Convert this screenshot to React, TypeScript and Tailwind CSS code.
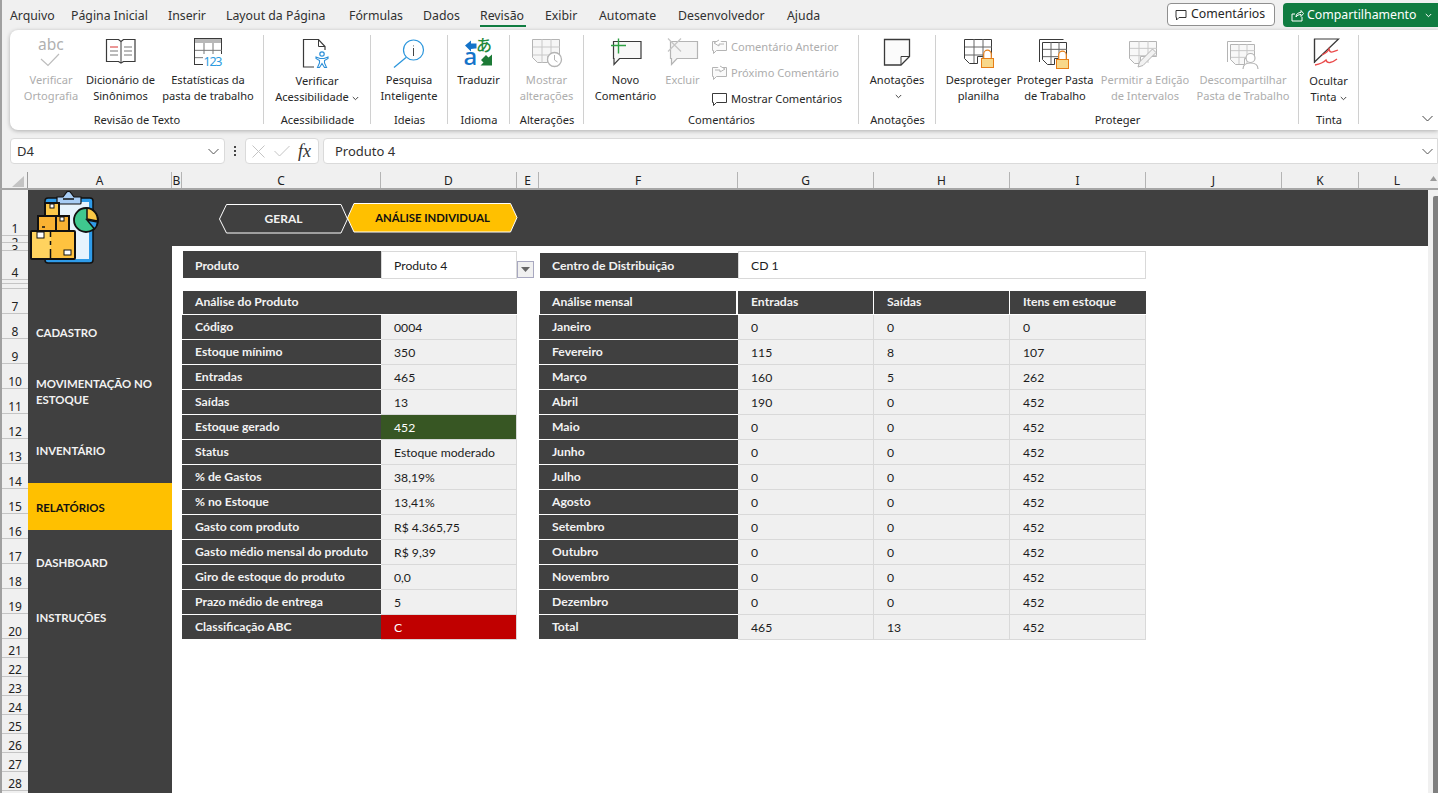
import React from "react";

const ui = { fontFamily: '"Noto Sans", "Open Sans", sans-serif' };
const cell = { fontFamily: 'Lato, "Noto Sans", sans-serif' };

function Ico({ x, y, w, h, children }: { x: number; y: number; w: number; h: number; children: React.ReactNode }) {
  return (
    <svg width={w} height={h} viewBox={`${x} ${y} ${w} ${h}`} fill="none" className="block shrink-0 overflow-visible">
      {children}
    </svg>
  );
}

const D = "#3a3a3a";
const G = "#b4b4b4";

function GridLines({ x, y, w, h, c, cols = 3, rows = 3 }: { x: number; y: number; w: number; h: number; c: string; cols?: number; rows?: number }) {
  const l: React.ReactNode[] = [];
  for (let i = 1; i < cols; i++) l.push(<path key={"c" + i} d={`M${x + (w * i) / cols} ${y}V${y + h}`} stroke={c} />);
  for (let i = 1; i < rows; i++) l.push(<path key={"r" + i} d={`M${x} ${y + (h * i) / rows}H${x + w}`} stroke={c} />);
  return <>{l}</>;
}

const icons: Record<string, React.ReactNode> = {
  abc: (
    <Ico x={34} y={38} w={34} h={32}>
      <text x={38} y={51} fontSize={15.5} fill="#b0b0b0" fontFamily="Noto Sans">abc</text>
      <path d="M41 60l7 6.5L59 55" stroke="#bdbdbd" strokeWidth={1.2} />
    </Ico>
  ),
  book: (
    <Ico x={102} y={38} w={36} h={28}>
      <path d="M105.5 40.5h12l2.5 2 2.5-2h11.5v22h-11.5l-2.5 1.5-2.5-1.5h-12z" stroke={D} strokeWidth={1.2} fill="#fff" />
      <path d="M120 42.5v21" stroke={D} />
      <path d="M109 48h8" stroke="#d8312e" />
      <path d="M109 52h8M109 56h8M123 48h8M123 52h8M123 56h8" stroke="#777" />
    </Ico>
  ),
  stats: (
    <Ico x={192} y={38} w={32} h={30}>
      <rect x={194.5} y={39.5} width={27} height={26} stroke={D} fill="#fff" />
      <rect x={195} y={40} width={26} height={4} fill="#b7b7b7" />
      <GridLines x={195} y={44} w={27} h={22} c="#777" />
      <rect x={203} y={55} width={20} height={12} fill="#fff" />
      <text x={203.5} y={66.5} fontSize={12.5} fill="#2d9be0" fontFamily="Noto Sans" textLength={19}>123</text>
    </Ico>
  ),
  access: (
    <Ico x={304} y={37} w={32} h={33}>
      <path d="M306.5 39.5h15l6.5 7v20.5h-21.5z" stroke={D} strokeWidth={1.2} fill="#fff" />
      <path d="M321.5 39.5v7h6.5" stroke={D} />
      <rect x={317} y={50} width={17} height={19} fill="#fff" />
      <circle cx={325} cy={54} r={2.2} stroke="#2c8fd8" strokeWidth={1.2} />
      <path d="M319 57l4 1.5h4l4-1.5v1.5l-3.5 2v2.5l2 4.5h-2l-2.5-4-2.5 4h-2l2-4.500v-2.500l-3.500-2z" stroke="#2c8fd8" strokeWidth={1.1} fill="#fff" />
    </Ico>
  ),
  search: (
    <Ico x={392} y={37} w={34} h={33}>
      <circle cx={413.5} cy={50} r={10} stroke="#2c96dc" strokeWidth={1.2} fill="#fff" />
      <path d="M406 57.500l-12 10" stroke="#2c96dc" strokeWidth={1.3} />
      <path d="M413.500 45.500v.8M413.500 48v8" stroke="#444" />
    </Ico>
  ),
  translate: (
    <Ico x={463} y={38} w={31} h={31}>
      <path d="M465 46.500l6-5v3h5.500v5h-1.500l-4 .5v2.500z" fill="#1473c9" />
      <text x={463.5} y={66} fontSize={24} fill="#1473c9" fontFamily="Noto Sans" fontWeight={500}>a</text>
      <text x={476} y={52} fontSize={16} fill="#1f8a3c" fontFamily="Noto Sans CJK JP" fontWeight={500}>あ</text>
      <path d="M492 66.500h-11.500l3-3-2.500-2.500 5-5 2.500 2.500 3.500-3z" fill="#1c7a36" />
    </Ico>
  ),
  changes: (
    <Ico x={531} y={38} w={34} h={32}>
      <path d="M533.500 40.500h27v17h-12v6h-10l-5-5z" stroke={G} fill="#f6f6f6" />
      <GridLines x={534} y={40} w={27} h={24} c="#c8c8c8" />
      <circle cx={555.5} cy={60.5} r={7} stroke={G} strokeWidth={1.3} fill="#fff" />
      <path d="M555.500 56v5l3 2" stroke={G} />
    </Ico>
  ),
  newc: (
    <Ico x={608} y={36} w={34} h={32}>
      <path d="M612.500 40.500h27.500v17h-21.500l-5.500 6v-6h-.5z" stroke={D} strokeWidth={1.2} fill="#f7f7f7" />
      <path d="M610 44.500h15M617.500 37.500v15" stroke="#2ea043" strokeWidth={1.4} />
    </Ico>
  ),
  delc: (
    <Ico x={665} y={36} w={34} h={32}>
      <path d="M669.500 40.500h27v17h-20.500l-5.500 6v-6h-1z" stroke={G} strokeWidth={1.2} fill="#f4f4f4" />
      <path d="M667 37.500l13 13M680 37.500l-13 13" stroke="#c6c6c6" strokeWidth={1.3} />
    </Ico>
  ),
  note: (
    <Ico x={882} y={38} w={30} h={30}>
      <path d="M884.500 40.500h25v17l-8.500 8.500h-16.500z" stroke={D} strokeWidth={1.3} fill="#fbfbfb" />
      <path d="M909.500 57.500h-8.500v8.500" stroke={D} />
    </Ico>
  ),
  unprot: (
    <Ico x={962} y={38} w={34} h={32}>
      <path d="M964.500 40.500h27v17h-14v7h-8l-5-5z" stroke={D} fill="#fff" />
      <GridLines x={965} y={40} w={27} h={24} c="#666" />
      <rect x={981.5} y={59.5} width={12} height={9} fill="#f8d88a" stroke="#e67e17" />
      <path d="M983.700 59v-4a3.800 3.800 0 0 1 7.600 0v4" stroke="#e67e17" strokeWidth={1.2} fill="#fff" />
    </Ico>
  ),
  prot: (
    <Ico x={1040} y={37} w={34} h={33}>
      <path d="M1041.500 62v-22.500h24" stroke={D} />
      <path d="M1044.500 42.500h24v16h-12v6h-7l-5-5z" stroke={D} fill="#fff" />
      <GridLines x={1045} y={42} w={24} h={22} c="#666" />
      <rect x={1058.5} y={59.5} width={12} height={9} fill="#f8d88a" stroke="#e67e17" />
      <path d="M1060.700 59v-4a3.800 3.800 0 0 1 7.600 0v4" stroke="#e67e17" strokeWidth={1.2} fill="#fff" />
    </Ico>
  ),
  permit: (
    <Ico x={1130} y={38} w={34} h={32}>
      <path d="M1131.500 42.500h27v15h-16v7h-6l-5-5z" stroke={G} fill="#f8f8f8" />
      <GridLines x={1132} y={42} w={27} h={22} c="#c8c8c8" />
      <path d="M1140 68l1.500-5 13-13 3.500 3.500-13 13z" stroke={G} fill="#f2f2f2" />
    </Ico>
  ),
  unshare: (
    <Ico x={1227} y={37} w={34} h={33}>
      <path d="M1228.500 62v-20.500h24" stroke={G} />
      <path d="M1231.500 44.500h24v14h-10v6h-9l-5-5z" stroke={G} fill="#f8f8f8" />
      <GridLines x={1232} y={44} w={24} h={20} c="#c8c8c8" />
      <circle cx={1251.5} cy={58} r={4.5} stroke={G} strokeWidth={1.2} fill="#fff" />
      <path d="M1244 69c0-4 3-6 7.500-6s7.500 2 7.500 6" stroke={G} strokeWidth={1.2} fill="#fff" />
    </Ico>
  ),
  ink: (
    <Ico x={1313} y={38} w={34} h={30}>
      <path d="M1315.500 40h24l-24 23z" stroke={D} strokeWidth={1.2} fill="#fff" />
      <path d="M1315.500 40v24" stroke={D} strokeWidth={1.2} />
      <path d="M1323 56c4-2 6-3 7-6 1 5 4 3 9 1M1316 66c5-1 8-2 11-5 1 4 6 3 11-1" stroke="#ea4b4b" strokeWidth={1.3} />
    </Ico>
  ),
};

const Bub = ({ gray, dir }: { gray?: boolean; dir?: "l" | "r" }) => {
  const c = gray ? G : D;
  return (
    <svg width="17" height="16" viewBox="0 0 17 16" fill="none" className="shrink-0">
      <path d="M1.500 2.500h14v9h-10l-3 3v-3h-1z" stroke={c} fill={gray ? "#fafafa" : "#fff"} />
      {dir === "l" && <path d="M8 1L3 4l5 3V5h5" stroke={c} fill="#fff" />}
      {dir === "r" && <path d="M9 1l5 3-5 3V5H4" stroke={c} fill="#fff" />}
    </svg>
  );
};

function Caret({ c = "#444" }: { c?: string }) {
  return (
    <svg width="7" height="5" viewBox="0 0 7 5" fill="none" className="inline-block ml-[3px] align-middle">
      <path d="M.800 1l2.700 2.700L6.200 1" stroke={c} strokeWidth="1" />
    </svg>
  );
}

function Btn({ w, ico, a, b, off, caret, low }: { w: number; ico: string; a: string; b?: string; off?: boolean; caret?: boolean; low?: boolean }) {
  return (
    <div style={{ width: w }} className="flex flex-col items-center shrink-0">
      <div className="h-[42px] flex items-start justify-center pt-[7px]">{icons[ico]}</div>
      <div className={`whitespace-nowrap text-center leading-[16px] ${low ? "mt-[1px]" : ""} ${off ? "text-[#adadad]" : "text-[#262626]"}`}>
        <div>{a}</div>
        {b && (
          <div>
            {b}
            {caret && <Caret />}
          </div>
        )}
      </div>
    </div>
  );
}

function Group({ w, label, children, last }: { w: number; label: string; children?: React.ReactNode; last?: boolean }) {
  return (
    <div style={{ width: w }} className="relative h-full flex flex-col shrink-0">
      <div className="flex-1 flex min-h-0">{children}</div>
      <div className="h-[20px] leading-[20px] text-center text-[#262626] whitespace-nowrap">{label}</div>
      {!last && <div className="absolute right-0 top-[5px] bottom-[6px] w-px bg-[#d0d0d0]" />}
    </div>
  );
}

const tabs: [string, number][] = [
  ["Arquivo", 61], ["Página Inicial", 97], ["Inserir", 58], ["Layout da Página", 123], ["Fórmulas", 74], ["Dados", 57],
  ["Revisão", 65], ["Exibir", 54], ["Automate", 79], ["Desenvolvedor", 109], ["Ajuda", 50],
];

function TopBar() {
  return (
    <div className="h-[30px] flex items-start pl-[10px] pr-0 relative">
      {tabs.map(([t, w]) => (
        <div key={t} style={{ width: w }} className="h-[27px] leading-[31px] text-[12.3px] text-[#303030] whitespace-nowrap relative shrink-0">
          {t}
          {t === "Revisão" && <div className="absolute left-0 top-[25px] h-[2px] w-[46px] bg-[#107c41]" />}
        </div>
      ))}
      <div className="ml-auto flex items-start pt-[3px]">
        <div className="w-[108px] h-[23px] rounded-[4px] border border-[#8f8f8f] bg-white flex items-center pl-[7px] gap-[4px] text-[12.3px] text-[#262626]">
          <svg width="12" height="12" viewBox="0 0 12 12" fill="none"><path d="M1 1.500h10v7H4l-2.500 2.500V8.500H1z" stroke="#333" /></svg>
          Comentários
        </div>
        <div className="w-[155px] h-[24px] ml-[8px] rounded-l-[4px] bg-[#107c41] flex items-center pl-[8px] text-[12.3px] text-white whitespace-nowrap">
          <svg width="13" height="13" viewBox="0 0 13 13" fill="none" className="mr-[3px]"><path d="M1 5v7h10V8M5 8c0-3 2-4.500 5-4.500V1.500l2.500 3-2.500 3V5.500C7.500 5.500 6 6.500 5 8zM1 5h3" stroke="#fff" /></svg>
          Compartilhamento
          <span className="ml-auto mr-[6px] flex"><Caret c="#fff" /></span>
        </div>
      </div>
    </div>
  );
}

function Small({ off, dir, t }: { off?: boolean; dir?: "l" | "r"; t: string }) {
  return (
    <div className={`h-[26px] shrink-0 flex items-center gap-[3px] whitespace-nowrap ${off ? "text-[#adadad]" : "text-[#262626]"}`}>
      <Bub gray={off} dir={dir} />
      {t}
    </div>
  );
}

function Ribbon() {
  return (
    <div className="mx-0 ml-[10px] h-[100px] bg-white rounded-l-[8px] shadow-[0_1px_4px_rgba(0,0,0,0.28)] flex text-[11.1px] relative">
      <Group w={254} label="Revisão de Texto">
        <div className="flex pl-[3px]">
          <Btn w={76} ico="abc" a="Verificar" b="Ortografia" off />
          <Btn w={63} ico="book" a="Dicionário de" b="Sinônimos" />
          <Btn w={112} ico="stats" a="Estatísticas da" b="pasta de trabalho" />
        </div>
      </Group>
      <Group w={107} label="Acessibilidade">
        <Btn w={106} ico="access" a="Verificar" b="Acessibilidade" caret low />
      </Group>
      <Group w={77} label="Ideias">
        <Btn w={76} ico="search" a="Pesquisa" b="Inteligente" />
      </Group>
      <Group w={62} label="Idioma">
        <Btn w={61} ico="translate" a="Traduzir" />
      </Group>
      <Group w={74} label="Alterações">
        <Btn w={73} ico="changes" a="Mostrar" b="alterações" off />
      </Group>
      <Group w={275} label="Comentários">
        <div className="flex pl-[2px]">
          <Btn w={79} ico="newc" a="Novo" b="Comentário" />
          <Btn w={35} ico="delc" a="Excluir" off />
          <div className="pl-[11px] pt-[4px] flex flex-col">
            <Small off dir="l" t="Comentário Anterior" />
            <Small off dir="r" t="Próximo Comentário" />
            <Small t="Mostrar Comentários" />
          </div>
        </div>
      </Group>
      <Group w={77} label="Anotações">
        <div className="w-[76px] flex flex-col items-center">
          <div className="h-[42px] pt-[7px]">{icons.note}</div>
          <div className="leading-[16px] text-[#262626]">Anotações</div>
          <div className="leading-[16px] -mt-[1px]"><Caret /></div>
        </div>
      </Group>
      <Group w={363} label="Proteger">
        <div className="flex pl-[7px]">
          <Btn w={71} ico="unprot" a="Desproteger" b="planilha" />
          <Btn w={82} ico="prot" a="Proteger Pasta" b="de Trabalho" />
          <Btn w={98} ico="permit" a="Permitir a Edição" b="de Intervalos" off />
          <Btn w={98} ico="unshare" a="Descompartilhar" b="Pasta de Trabalho" off />
        </div>
      </Group>
      <Group w={60} label="Tinta">
        <Btn w={59} ico="ink" a="Ocultar" b="Tinta" caret low />
      </Group>
      <svg width="11" height="7" viewBox="0 0 11 7" fill="none" className="absolute right-[5px] bottom-[8px]"><path d="M.500 1l5 5 5-5" stroke="#444" /></svg>
    </div>
  );
}

function FormulaBar() {
  return (
    <div className="mt-[8px] h-[26px] flex text-[13px] text-[#303030]">
      <div className="ml-[10px] w-[215px] bg-white border border-[#dadada] rounded-[4px] flex items-center pl-[6px] pt-px">
        D4
        <svg width="11" height="7" viewBox="0 0 11 7" fill="none" className="ml-auto mr-[5px]"><path d="M.500 1l5 5 5-5" stroke="#555" /></svg>
      </div>
      <div className="w-[20px] flex flex-col items-center justify-center gap-[2px]">
        <span className="w-[2px] h-[2px] bg-[#444]" /><span className="w-[2px] h-[2px] bg-[#444]" /><span className="w-[2px] h-[2px] bg-[#444]" />
      </div>
      <div className="w-[74px] bg-white border border-[#dadada] rounded-[4px] flex items-center pl-[6px] gap-[9px]">
        <svg width="13" height="13" viewBox="0 0 13 13" fill="none"><path d="M.500.500l12 12M12.500.500l-12 12" stroke="#c4c4c4" /></svg>
        <svg width="16" height="12" viewBox="0 0 16 12" fill="none"><path d="M.500 6l5 5 10-10" stroke="#c4c4c4" /></svg>
        <span className="italic text-[18px] leading-none text-[#333] -ml-[1px]" style={{ fontFamily: '"Liberation Serif", serif' }}>fx</span>
      </div>
      <div className="ml-[4px] flex-1 bg-white border border-[#dadada] rounded-l-[4px] flex items-center pl-[11px] pt-px">
        Produto 4
        <svg width="11" height="7" viewBox="0 0 11 7" fill="none" className="ml-auto mr-[4px]"><path d="M.500 1l5 5 5-5" stroke="#555" /></svg>
      </div>
    </div>
  );
}

const cols: [string, number][] = [
  ["A", 144], ["B", 10], ["C", 199], ["D", 136], ["E", 22], ["F", 199], ["G", 136], ["H", 136], ["I", 136], ["J", 136], ["K", 77],
];

function ColHeaders() {
  return (
    <div className="h-[16px] flex box-content border-b-2 border-[#a6a6a6]">
      <div className="w-[28px] shrink-0 relative border-r border-[#9a9a9a]">
        <svg width="12" height="11" viewBox="0 0 12 11" className="absolute left-[12px] top-[4px]"><path d="M12 0v11H0z" fill="#c3c3c3" /></svg>
      </div>
      {cols.map(([c, w]) => (
        <div key={c} style={{ width: w }} className="shrink-0 text-center text-[12px] leading-[18px] text-[#222] border-r border-[#b4b4b4]">{c}</div>
      ))}
      <div className="w-[69px] shrink-0 pl-[7px] text-center text-[12px] leading-[18px] text-[#222]">L</div>
      <div className="w-[10px] shrink-0 relative">
        <svg width="7" height="5" viewBox="0 0 7 5" className="absolute left-[2px] top-[4px]"><path d="M0 5l3.500-5L7 5z" fill="#9a9a9a" /></svg>
      </div>
    </div>
  );
}

const rows: [string, number][] = [
  ["1", 46], ["2", 7], ["3", 8], ["4", 29], ["", 4], ["", 5], ["7", 25], ["8", 25], ["9", 25], ["10", 25], ["11", 25], ["12", 25], ["13", 25],
  ["14", 25], ["15", 25], ["16", 25], ["17", 25], ["18", 25], ["19", 25], ["20", 25], ["21", 19], ["22", 19], ["23", 19], ["24", 19], ["25", 19], ["26", 19], ["27", 19], ["28", 19], ["", 19],
];

function RowHeaders() {
  return (
    <div className="w-[28px] shrink-0 flex flex-col pl-[2px]">
      {rows.map(([r, h], i) => (
        <div
          key={i}
          style={{ height: h }}
          className={`shrink-0 overflow-hidden flex justify-center text-[12px] leading-[13px] text-[#222] border-b border-[#c4c4c4] ${h < 10 ? "items-start" : "items-end"}`}
        >
          {r}
        </div>
      ))}
    </div>
  );
}

function Logo() {
  return (
    <svg width="70" height="74" viewBox="29 190 70 74" fill="none" className="block">
      <rect x="45" y="197" width="48" height="65" rx="3" fill="#2f9be8" stroke="#111" strokeWidth="1.500" />
      <rect x="48" y="201" width="41" height="57" fill="#e6f3fd" />
      <path d="M57 196h6l3-4c1-2 4-2 5 0l3 4h7v6a1 1 0 0 1-1 1H57z" fill="#a8cdf5" stroke="#111" strokeWidth="1.200" />
      <path d="M63 198h11" stroke="#111" strokeWidth="1.500" />
      <rect x="45" y="202" width="14" height="13" fill="#fdc94a" stroke="#111" strokeWidth="2" />
      <rect x="50" y="203" width="4" height="4" fill="#fff" stroke="#111" />
      <rect x="38" y="215" width="18" height="15" fill="#f9b233" stroke="#111" strokeWidth="2" />
      <path d="M42 226h3" stroke="#111" strokeWidth="1.500" />
      <rect x="56" y="215" width="13" height="15" fill="#f9b233" stroke="#111" strokeWidth="2" />
      <rect x="60" y="216" width="4" height="4" fill="#fff" stroke="#111" />
      <rect x="31" y="230" width="44" height="28" rx="1" fill="#ffc23f" />
      <rect x="31" y="230" width="20" height="28" fill="#ffd35f" />
      <rect x="31" y="230" width="44" height="28" rx="1" stroke="#111" strokeWidth="2" />
      <path d="M50.500 230v6M50.500 240v4M50.500 248v10" stroke="#111" strokeWidth="1.500" />
      <rect x="37" y="231" width="7" height="6" fill="#fff" stroke="#111" />
      <rect x="64" y="249" width="7" height="5" fill="#fff" stroke="#111" />
      <circle cx="86" cy="219" r="12" fill="#3fc88e" stroke="#111" strokeWidth="1.800" />
      <path d="M87 207a12 12 0 0 1 10.500 13L87 218z" fill="#fbc945" stroke="#111" strokeWidth="1.500" />
      <path d="M87 219l10.500 2a12 12 0 0 1-3 7z" fill="#2f9be8" stroke="#111" strokeWidth="1.500" />
    </svg>
  );
}

function Nav({ h, active, pb, pt, children }: { h: number; active?: boolean; pb?: number; pt?: number; children: React.ReactNode }) {
  return (
    <div
      style={{ height: h, paddingBottom: pb, paddingTop: pt }}
      className={`flex items-center pl-[8px] pr-[4px] text-[11.4px] font-bold leading-[16px] ${active ? "bg-[#ffc000] text-[#111]" : "text-[#f2f2f2]"}`}
    >
      <div>{children}</div>
    </div>
  );
}

function Sidebar() {
  return (
    <div className="w-[144px] shrink-0 bg-[#404040] flex flex-col" style={cell}>
      <div className="h-[116px] pt-[1px] pl-[1px]"><Logo /></div>
      <Nav h={54}>CADASTRO</Nav>
      <Nav h={65} pb={2}>MOVIMENTAÇÃO NO ESTOQUE</Nav>
      <Nav h={58} pb={6}>INVENTÁRIO</Nav>
      <Nav h={47} active pt={2}>RELATÓRIOS</Nav>
      <Nav h={66}>DASHBOARD</Nav>
      <Nav h={44}>INSTRUÇÕES</Nav>
    </div>
  );
}

function Banner() {
  return (
    <div className="h-[56px] bg-[#404040] flex items-start pl-[47px] pt-[13px]" style={cell}>
      <div className="relative w-[129px] h-[30px] mt-px flex items-center justify-center">
        <svg width="129" height="30" viewBox="0 0 129 30" className="absolute inset-0">
          <path d="M.500 15L7.500 .500H122L128.500 15 122 29H7.500z" fill="#404040" stroke="#fff" />
        </svg>
        <span className="relative text-[12px] font-bold text-[#f2f2f2]">GERAL</span>
      </div>
      <div className="relative w-[171px] h-[30px] -ml-[1px] flex items-center justify-center">
        <svg width="171" height="30" viewBox="0 0 171 30" className="absolute inset-0">
          <path d="M.500 15L7 .500H163.500L170 14.500 163.500 29H7z" fill="#ffc000" stroke="#fff" />
        </svg>
        <span className="relative text-[11.300px] font-bold text-[#111]">ANÁLISE INDIVIDUAL</span>
      </div>
    </div>
  );
}

const left: [string, string, string?][] = [
  ["Código", "0004"], ["Estoque mínimo", "350"], ["Entradas", "465"], ["Saídas", "13"], ["Estoque gerado", "452", "g"], ["Status", "Estoque moderado"],
  ["% de Gastos", "38,19%"], ["% no Estoque", "13,41%"], ["Gasto com produto", "R$ 4.365,75"], ["Gasto médio mensal do produto", "R$ 9,39"],
  ["Giro de estoque do produto", "0,0"], ["Prazo médio de entrega", "5"], ["Classificação ABC", "C", "r"],
];

const right: [string, string, string, string][] = [
  ["Janeiro", "0", "0", "0"], ["Fevereiro", "115", "8", "107"], ["Março", "160", "5", "262"], ["Abril", "190", "0", "452"], ["Maio", "0", "0", "452"],
  ["Junho", "0", "0", "452"], ["Julho", "0", "0", "452"], ["Agosto", "0", "0", "452"], ["Setembro", "0", "0", "452"], ["Outubro", "0", "0", "452"],
  ["Novembro", "0", "0", "452"], ["Dezembro", "0", "0", "452"], ["Total", "465", "13", "452"],
];

const Lab = ({ t }: { t: string }) => (
  <div className="h-[25px] bg-[#404040] border-b border-white text-[#f2f2f2] font-bold pl-[13px] leading-[23px] whitespace-nowrap">{t}</div>
);

const Val = ({ t, k }: { t: string; k?: string }) => (
  <div
    className={`h-[25px] pl-[13px] leading-[25px] border-b border-r border-[#d9d9d9] whitespace-nowrap ${
      k === "g" ? "bg-[#375623] text-white" : k === "r" ? "bg-[#c00000] text-white" : "bg-[#f0f0f0] text-[#1c1c1c]"
    }`}
  >
    {t}
  </div>
);

const Head = ({ t, cls }: { t: string; cls: string }) => (
  <div className={`h-[23px] bg-[#404040] text-[#f2f2f2] font-bold leading-[22px] whitespace-nowrap ${cls}`}>{t}</div>
);

function Tables() {
  return (
    <div className="pl-[10px] pt-[5px] flex gap-[22px] text-[12.2px]" style={cell}>
      <div className="w-[335px] shrink-0">
        <div className="flex h-[28px] relative">
          <div className="w-[199px] ml-px bg-[#404040] text-[#f2f2f2] font-bold pl-[12px] leading-[29px] h-[27px]">Produto</div>
          <div className="w-[136px] -ml-px bg-white border border-[#d9d9d9] pl-[12px] leading-[28px] text-[#1c1c1c]">Produto 4</div>
          <div className="absolute left-[335px] top-[10px] w-[17px] h-[17px] bg-[#f0f0f0] border border-[#a8a8c0] flex items-center justify-center">
            <svg width="9" height="5" viewBox="0 0 9 5"><path d="M0 0h9L4.500 5z" fill="#666" /></svg>
          </div>
        </div>
        <div className="mt-[12px] ml-px"><Head t="Análise do Produto" cls="pl-[12px]" /></div>
        <div className="mt-px grid grid-cols-[199px_136px]">
          {left.map(([a, b, k]) => (
            <React.Fragment key={a}>
              <Lab t={a} />
              <Val t={b} k={k} />
            </React.Fragment>
          ))}
        </div>
      </div>
      <div className="w-[607px] shrink-0">
        <div className="flex h-[28px]">
          <div className="w-[198px] ml-px mt-[2px] h-[25px] bg-[#404040] text-[#f2f2f2] font-bold pl-[12px] leading-[25px]">Centro de Distribuição</div>
          <div className="w-[408px] bg-white border border-[#d9d9d9] pl-[12px] leading-[28px] text-[#1c1c1c]">CD 1</div>
        </div>
        <div className="mt-[12px] grid grid-cols-[199px_136px_136px_136px]">
          <Head t="Análise mensal" cls="ml-px mr-[2px] pl-[12px]" />
          <Head t="Entradas" cls="mr-px pl-[13px]" />
          <Head t="Saídas" cls="mr-px pl-[13px]" />
          <Head t="Itens em estoque" cls="pl-[13px]" />
        </div>
        <div className="mt-px grid grid-cols-[199px_136px_136px_136px]">
          {right.map(([a, b, c, d]) => (
            <React.Fragment key={a}>
              <Lab t={a} />
              <Val t={b} />
              <Val t={c} />
              <Val t={d} />
            </React.Fragment>
          ))}
        </div>
      </div>
    </div>
  );
}

function Scroll() {
  return (
    <div className="w-[10px] shrink-0 bg-[#f0f0f0] relative">
      <div className="absolute left-[5px] right-0 top-[6px] bottom-0 bg-[#7f7f7f] rounded-tl-[2px]" />
    </div>
  );
}

export default function App() {
  return (
    <div className="w-[1438px] h-[793px] overflow-hidden bg-[#f0f0f0] flex flex-col shadow-[inset_2px_0_0_#a0a0a0]" style={ui}>
      <TopBar />
      <Ribbon />
      <FormulaBar />
      <div className="mt-[8px] flex-1 min-h-0 flex flex-col">
        <ColHeaders />
        <div className="flex-1 min-h-0 flex">
          <RowHeaders />
          <Sidebar />
          <div className="w-[1256px] shrink-0 bg-white">
            <Banner />
            <Tables />
          </div>
          <Scroll />
        </div>
      </div>
    </div>
  );
}
